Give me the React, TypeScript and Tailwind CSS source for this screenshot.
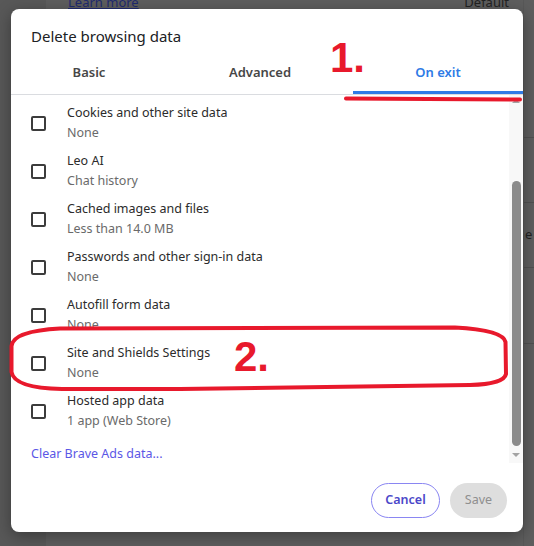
import React from 'react';

const items = [
  { label: 'Cookies and other site data', sub: 'None' },
  { label: 'Leo AI', sub: 'Chat history' },
  { label: 'Cached images and files', sub: 'Less than 14.0 MB' },
  { label: 'Passwords and other sign-in data', sub: 'None' },
  { label: 'Autofill form data', sub: 'None' },
  { label: 'Site and Shields Settings', sub: 'None' },
  { label: 'Hosted app data', sub: '1 app (Web Store)' },
];

function Checkbox() {
  return <div className="w-[15px] h-[15px] rounded-[2px] border-2 border-[#3c3c3c] bg-white shrink-0" />;
}

function Scrollbar() {
  return (
    <div className="w-[14px] shrink-0 bg-[#f8f8f8] flex flex-col items-center">
      <svg width="10" height="8" viewBox="0 0 10 8" className="mt-[2px] shrink-0">
        <path d="M1 6 L5 2 L9 6 Z" fill="#a3a3a3" />
      </svg>
      <div className="h-[76px] shrink-0" />
      <div className="w-[9px] h-[265px] rounded-full bg-[#8b8b8b] shrink-0 ml-[1px]" />
      <svg width="10" height="8" viewBox="0 0 10 8" className="mt-[5px] shrink-0">
        <path d="M1 2 L9 2 L5 6 Z" fill="#a3a3a3" />
      </svg>
    </div>
  );
}

export default function App() {
  return (
    <div
      className="relative w-[534px] h-[546px] overflow-hidden bg-[#5e5e5e]"
      style={{ fontFamily: '"Noto Sans", "Open Sans", sans-serif' }}
    >
      {/* page behind the modal */}
      <div className="flex h-full">
        <div className="w-[46px] h-full bg-[#585858]" />
        <div className="flex-1 flex flex-col">
          <div className="flex justify-between -mt-[7px] pl-[22px] pr-[14px] text-[13px]">
            <span className="text-[#1f2a6e] underline">Learn more</span>
            <span className="text-[#222]">Default</span>
          </div>
        </div>
        <div className="w-[11px] h-full flex flex-col border-l border-[#585858]">
          <div className="h-[138px] border-b border-[#505050]" />
          <div className="h-[65px] border-b border-[#505050]" />
          <div className="h-[65px] border-b border-[#505050] flex items-center text-[13px] text-[#222] pl-[1px]">e</div>
          <div className="h-[76px] border-b border-[#505050]" />
        </div>
      </div>

      {/* modal dialog */}
      <div className="absolute left-[11px] top-[9px] w-[512px] h-[523px] bg-white rounded-[8px] shadow-[0_4px_16px_rgba(0,0,0,0.35)] flex flex-col overflow-hidden">
        <div className="pl-[20px] pt-[16px] text-[15px] leading-[22px] text-[#202124]">Delete browsing data</div>

        <div className="flex mt-[5px] h-[43px] border-b border-[#dadce0] text-[13px] font-semibold">
          <div className="w-[156px] flex items-center justify-center text-[#474747]">Basic</div>
          <div className="w-[186px] flex items-center justify-center text-[#474747]">Advanced</div>
          <div className="flex-1 flex items-center justify-center text-[#2f7be6] border-b-[3px] border-[#2f7be6] pt-[3px]">On exit</div>
        </div>

        <div className="flex h-[368px]">
          <div className="flex-1 flex flex-col pl-[20px] pt-[8px]">
            <div className="flex flex-col gap-[8px]">
              {items.map((it) => (
                <div key={it.label} className="flex items-center gap-[21px] h-[40px]">
                  <Checkbox />
                  <div className="flex flex-col text-[12.5px] leading-[20px]">
                    <span className="text-[#2b2b2b]">{it.label}</span>
                    <span className="text-[#6a6a6a]">{it.sub}</span>
                  </div>
                </div>
              ))}
            </div>
            <div className="mt-[13px] text-[12.5px] leading-[20px] text-[#5b57e6]">Clear Brave Ads data...</div>
          </div>
          <Scrollbar />
        </div>

        <div className="flex justify-end gap-[10px] pr-[16px] pt-[20px]">
          <button className="w-[69px] h-[35px] rounded-full border border-[#8a86f2] text-[12.5px] font-semibold text-[#4b48c9] bg-white">
            Cancel
          </button>
          <button className="w-[57px] h-[35px] rounded-full bg-[#dedede] text-[12.5px] text-[#8f8f8f]">Save</button>
        </div>
      </div>

      {/* red annotations */}
      <svg className="absolute inset-0 pointer-events-none" width="534" height="546" viewBox="0 0 534 546">
        <path d="M346 98.5 L520 99.5" stroke="#e8192c" strokeWidth="4" strokeLinecap="round" fill="none" />
        <path
          d="M60 328.5 L455 327.5 Q503 330 505.5 342 L506 374 Q504 384 470 385 L180 389 L62 389 Q14 388 11.5 372 L11.5 346 Q13 331 60 328.5 Z"
          stroke="#e8192c"
          strokeWidth="4"
          fill="none"
        />
      </svg>
      <span
        className="absolute left-[330px] top-[37px] text-[42px] leading-none font-bold text-[#e8192c]"
        style={{ fontFamily: '"Liberation Sans", sans-serif' }}
      >
        1.
      </span>
      <span
        className="absolute left-[234px] top-[336px] text-[42px] leading-none font-bold text-[#e8192c]"
        style={{ fontFamily: '"Liberation Sans", sans-serif' }}
      >
        2.
      </span>
    </div>
  );
}
